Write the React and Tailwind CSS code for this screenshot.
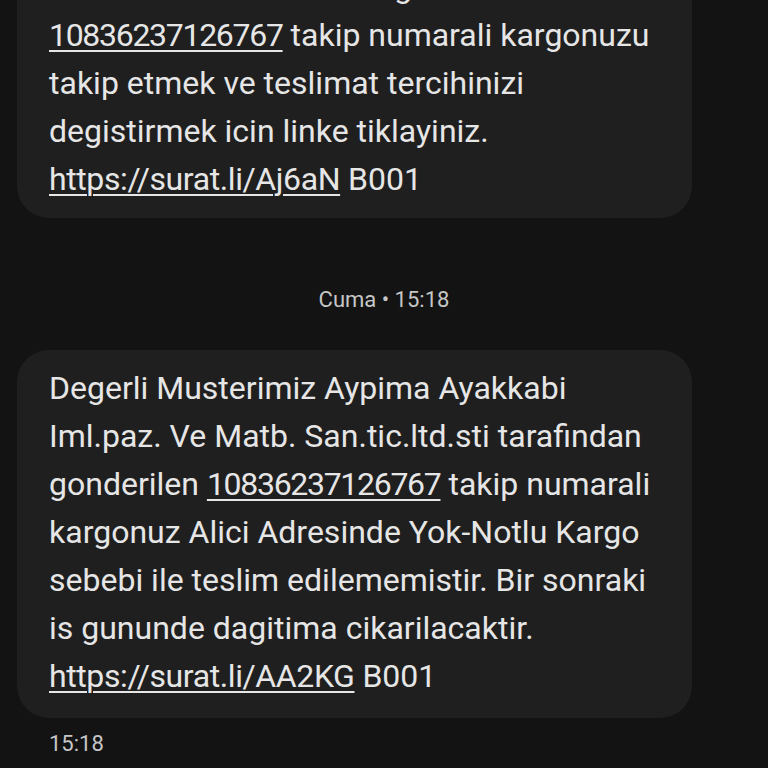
const link = "underline decoration-2 underline-offset-[4px]";
const num = `${link} tracking-[-1.3px]`;
const url = `${link} tracking-[-0.4px]`;

const Bubble = ({ className, children }) => (
  <div
    className={`ml-[17px] w-[675px] rounded-[32px] bg-[#1f1f1f] pl-[32px] pr-4 text-[32px] leading-[48px] text-[#e6e6e6] ${className}`}
  >
    {children}
  </div>
);

export default function App() {
  return (
    <div
      className="h-[768px] overflow-hidden bg-[#131313]"
      style={{ fontFamily: "Roboto, 'Noto Sans', sans-serif" }}
    >
      <div className="-mt-[51px]">
        <Bubble className="pt-[14px] pb-[15px]">
          <div className="whitespace-nowrap">San.tic.ltd.sti tarafindan gonderilen</div>
          <div className="whitespace-nowrap">
            <span className={num}>10836237126767</span> takip numarali kargonuzu
          </div>
          <div className="whitespace-nowrap">takip etmek ve teslimat tercihinizi</div>
          <div className="whitespace-nowrap">degistirmek icin linke tiklayiniz.</div>
          <div className="whitespace-nowrap">
            <span className={url}>https://surat.li/Aj6aN</span> B001
          </div>
        </Bubble>

        <div className="mt-[68px] text-center text-[22px] leading-[28px] text-[#c6c6c6]">
          Cuma • 15:18
        </div>

        <Bubble className="mt-[36px] pt-[14px] pb-[18px]">
          <div className="whitespace-nowrap">Degerli Musterimiz Aypima Ayakkabi</div>
          <div className="whitespace-nowrap">Iml.paz. Ve Matb. San.tic.ltd.sti tarafindan</div>
          <div className="whitespace-nowrap">
            gonderilen <span className={num}>10836237126767</span> takip numarali
          </div>
          <div className="whitespace-nowrap">kargonuz Alici Adresinde Yok-Notlu Kargo</div>
          <div className="whitespace-nowrap">sebebi ile teslim edilememistir. Bir sonraki</div>
          <div className="whitespace-nowrap">is gununde dagitima cikarilacaktir.</div>
          <div className="whitespace-nowrap">
            <span className={url}>https://surat.li/AA2KG</span> B001
          </div>
        </Bubble>

        <div className="mt-[12px] pl-[49px] text-[22px] leading-[28px] text-[#c6c6c6]">
          15:18
        </div>
      </div>
    </div>
  );
}
